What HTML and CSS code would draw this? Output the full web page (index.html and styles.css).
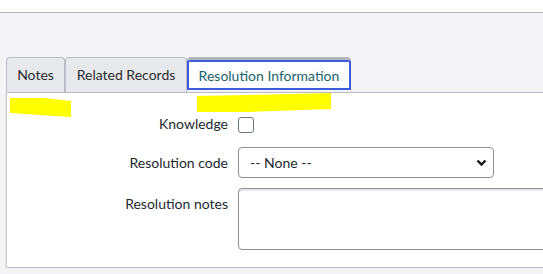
FILE: index.html
```html
<!DOCTYPE html>
<html lang="en">

<head>
    <meta charset="UTF-8">
    <meta name="viewport" content="width=device-width, initial-scale=1.0">
    <title>Resolution Information</title>
    <link rel="stylesheet" href="styles.css">
</head>

<body>

    <div class="top-bar"></div>

    <div class="content">
        <div class="tabs">
            <div class="tab tab-notes">Notes</div>
            <div class="tab tab-related">Related Records</div>
            <div class="tab active">Resolution Information</div>
        </div>

        <div class="panel">
            <div class="row row-check">
                <label class="label" for="knowledge">Knowledge</label>
                <input type="checkbox" id="knowledge" class="checkbox">
            </div>

            <div class="row row-select">
                <label class="label" for="code">Resolution code</label>
                <div class="select-wrap">
                    <select id="code" class="select">
                        <option>-- None --</option>
                    </select>
                    <svg class="chevron" width="11" height="8" viewBox="0 0 11 8">
                        <path d="M1.5 1.5l4 4 4-4" fill="none" stroke="#1b1b1b" stroke-width="2.4" />
                    </svg>
                </div>
            </div>

            <div class="row row-notes">
                <label class="label" for="notes">Resolution notes</label>
                <textarea id="notes" class="textarea"></textarea>
            </div>
        </div>
    </div>

    <!-- highlighter marks drawn over the screenshot -->
    <svg class="marks" width="543" height="274">
        <polygon points="10,98 44,98 71,101 71,117 40,115 10,113" fill="#ffff00" />
        <polygon points="197,96 290,94 331,93 331,109 300,110 250,112 197,112" fill="#ffff00" />
    </svg>

</body>

</html>
```

FILE: styles.css
```css
body {
    font-family: Lato, "Open Sans", sans-serif;
    font-size: 14px;
    background-color: #f4f4f6;
    color: #1c2730;
    margin: 0;
    overflow: hidden;
    position: relative;
}

.top-bar {
    height: 12px;
    background-color: #fff;
    border-bottom: 1px solid #b5b7c0;
}

.content {
    padding: 44px 0 0 6px;
}

.tabs {
    display: flex;
    height: 35px;
}

.tab {
    display: flex;
    align-items: center;
    justify-content: center;
    box-sizing: border-box;
    padding-bottom: 1px;
    background-color: #e8e9ed;
    border: 1px solid #b9bcc4;
    border-bottom: none;
    border-radius: 4px 4px 0 0;
    color: #2b2b2b;
}

.tab-notes {
    width: 59px;
}

.tab-related {
    width: 122px;
}

.tab.active {
    position: relative;
    z-index: 1;
    width: 164px;
    height: 33px;
    margin-bottom: -1px;
    padding-bottom: 0;
    background-color: #fff;
    border: none;
    border-top: 3px solid #b3b6bf;
    box-shadow: inset 0 0 0 2px #3d5bdb;
    color: #17656c;
}

.panel {
    height: 176px;
    margin-right: -20px;
    padding-top: 24px;
    box-sizing: border-box;
    background-color: #fff;
    border: 1px solid #b9bcc4;
    border-right: none;
    border-left-color: #c6c9cf;
    box-shadow: 0 1px 2px rgba(0, 0, 0, 0.18);
}

.row {
    display: flex;
    align-items: center;
    gap: 10px;
}

.label {
    flex-shrink: 0;
    width: 221px;
    text-align: right;
    color: #1c2730;
}

.row-check {
    height: 15px;
    margin-bottom: 15px;
}

.row-check .label {
    margin-top: -2px;
}

.checkbox {
    flex-shrink: 0;
    appearance: none;
    width: 16px;
    height: 16px;
    margin: 0;
    border: 1px solid #707782;
    border-radius: 3px;
    background-color: #fff;
}

.row-select {
    margin-bottom: 9px;
}

.select-wrap {
    position: relative;
    flex-shrink: 0;
}

.select {
    appearance: none;
    width: 256px;
    height: 31px;
    margin: 0;
    padding: 0 11px;
    font-family: inherit;
    font-size: 14px;
    color: #1c2730;
    background-color: #fff;
    border: 1px solid #8a8f98;
    border-radius: 4px;
}

.chevron {
    position: absolute;
    right: 7px;
    top: 12px;
    pointer-events: none;
}

.row-notes {
    align-items: flex-start;
    padding-top: 1px;
}

.row-notes .label {
    padding-top: 7px;
}

.textarea {
    flex-shrink: 0;
    width: 330px;
    height: 62px;
    margin: 0;
    box-sizing: border-box;
    resize: none;
    border: 1px solid #8a8f98;
    border-radius: 4px;
    box-shadow: inset 0 2px 0 #e6e7ea;
    background-color: #fff;
}

.marks {
    position: absolute;
    left: 0;
    top: 0;
    pointer-events: none;
}
```
